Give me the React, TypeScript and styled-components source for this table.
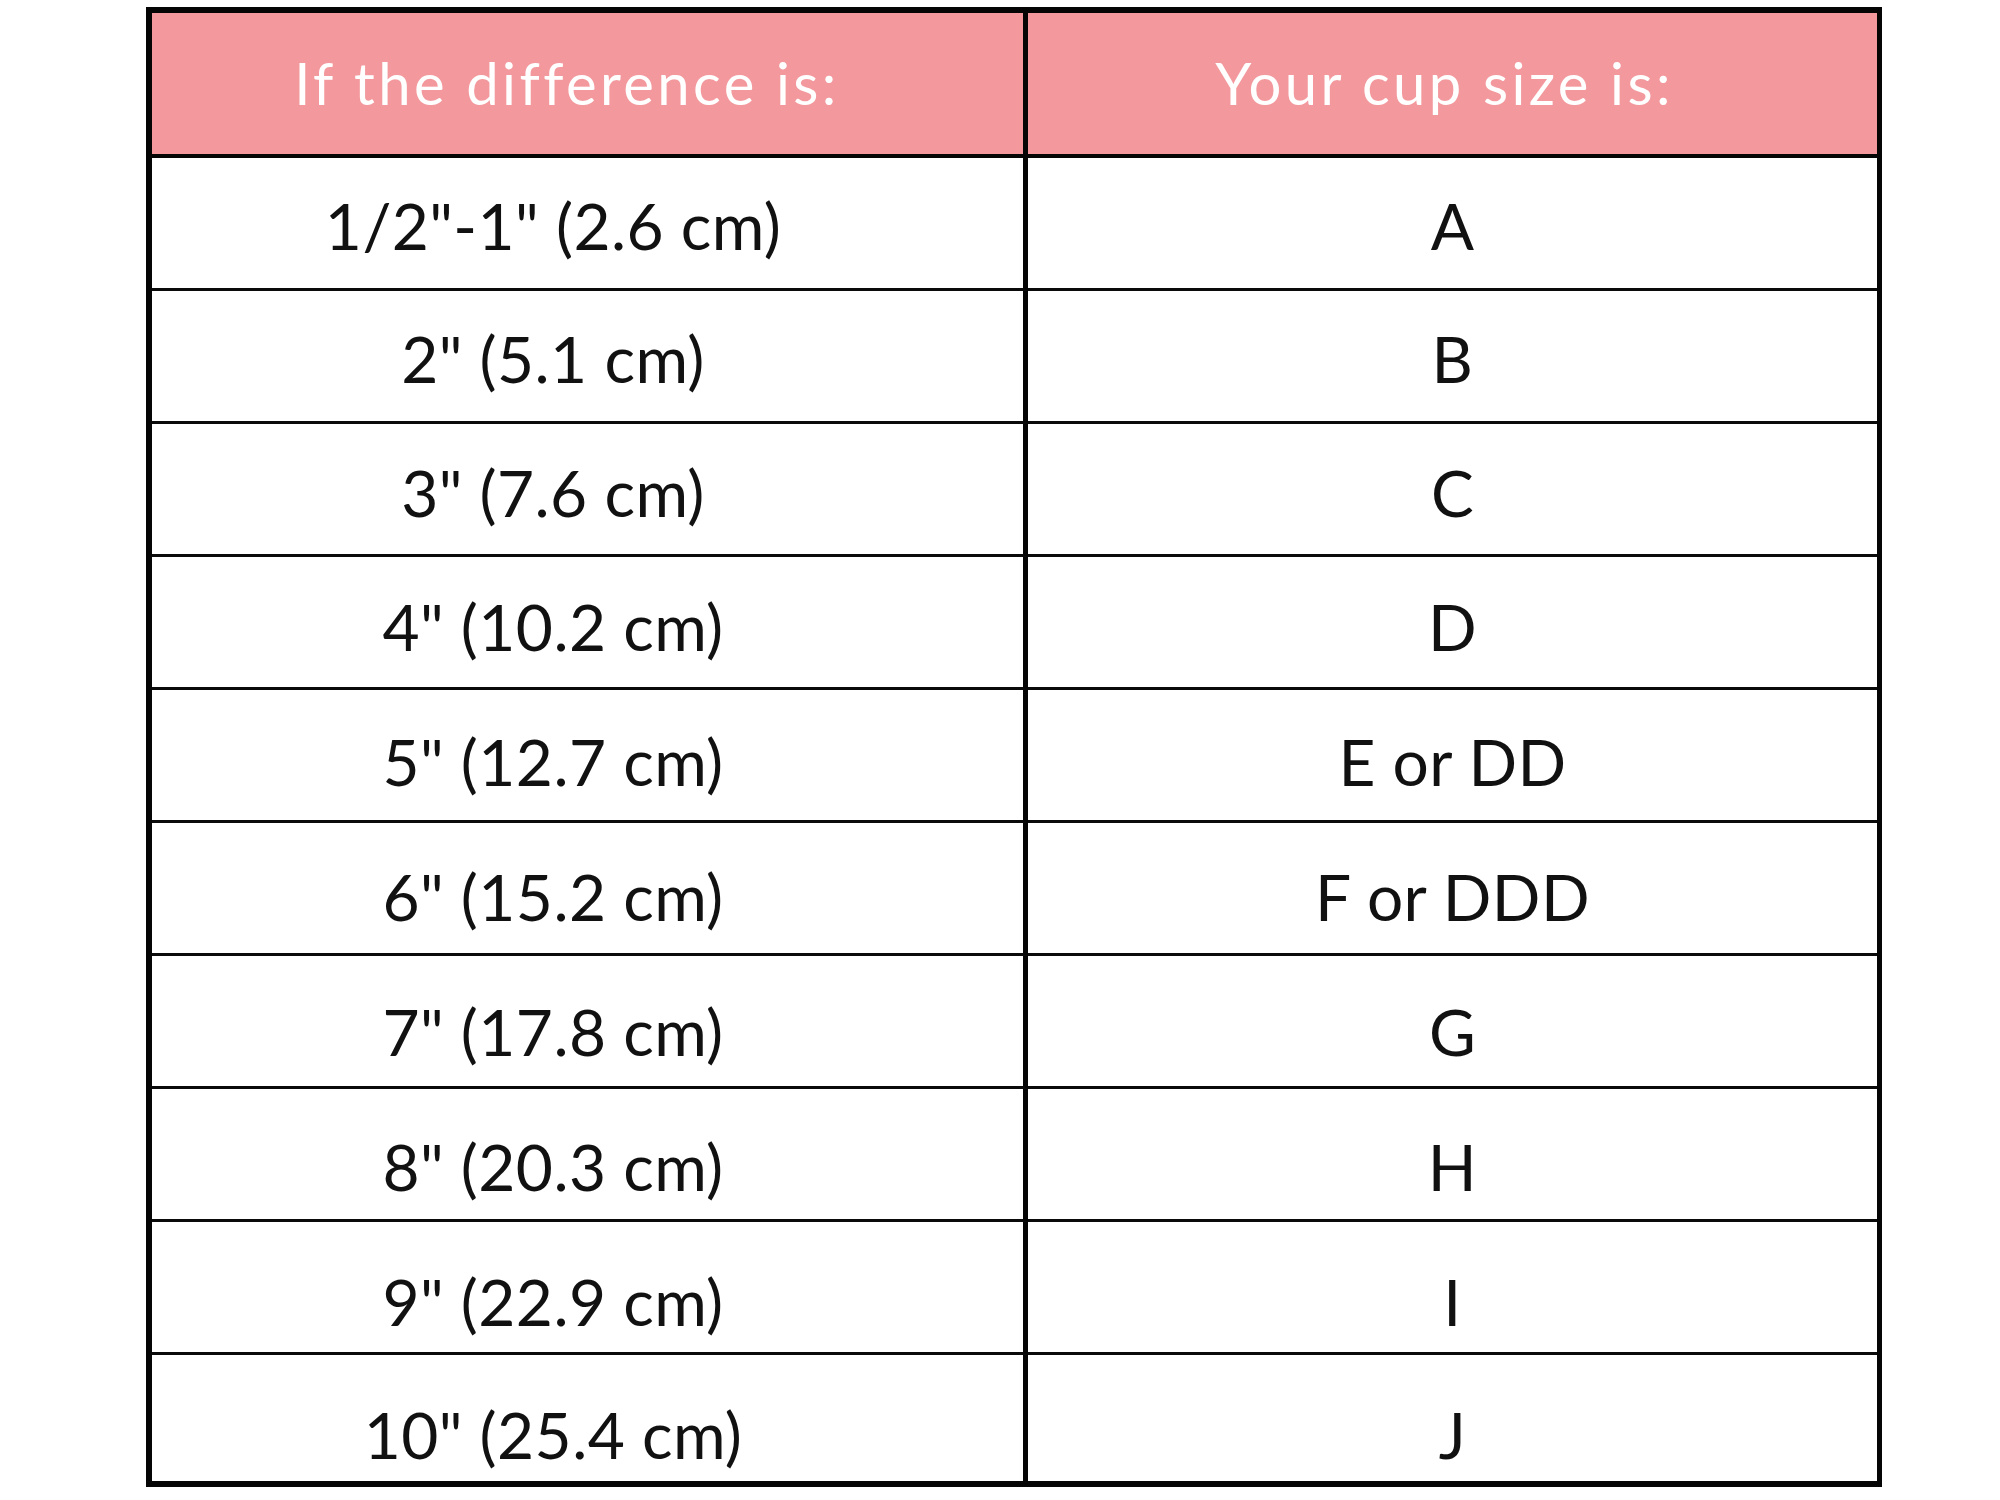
import styled, { createGlobalStyle } from 'styled-components';

const GlobalStyle = createGlobalStyle`
    html, body {
        margin: 0;
        padding: 0;
        background: #fff;
    }
`;

const Page = styled.div`
    width: 2000px;
    height: 1500px;
    box-sizing: border-box;
    padding: 7px 0 0 146px;
`;

const SizeTable = styled.div`
    width: 1736px;
    height: 1480px;
    box-sizing: border-box;
    border: 6px solid #050505;
    border-right-width: 5px;

    display: grid;
    grid-template-columns: 876px 1fr;
    grid-template-rows: 145px repeat(9, 133px) 1fr;
`;

const HeadCell = styled.div<{ $left?: boolean }>`
    box-sizing: border-box;
    display: flex;
    align-items: center;
    justify-content: center;
    padding-right: ${(p) => (p.$left ? '41px' : '16px')};
    padding-bottom: 3px;

    background: #f3999d;
    border-bottom: 4px solid #050505;
    border-right: ${(p) => (p.$left ? '5px solid #050505' : 'none')};

    color: #fff;
    font-family: Lato, 'Open Sans', sans-serif;
    font-size: 58px;
    font-weight: 400;
    letter-spacing: 3.4px;
    white-space: nowrap;
`;

const BodyCell = styled.div<{ $left?: boolean; $last?: boolean; $shift: number }>`
    box-sizing: border-box;
    display: flex;
    align-items: center;
    justify-content: center;
    padding-right: ${(p) => (p.$left ? '69px' : '0')};
    padding-top: ${(p) => p.$shift * 2}px;

    background: #fff;
    border-bottom: ${(p) => (p.$last ? 'none' : '3px solid #0a0a0a')};
    border-right: ${(p) => (p.$left ? '5px solid #050505' : 'none')};

    color: #111;
    font-family: Lato, 'Open Sans', sans-serif;
    font-size: 64px;
    font-weight: 400;
    letter-spacing: 0.4px;
    white-space: nowrap;
`;

// the text sits a little lower in each row further down the chart
const rows: [string, string, number][] = [
    ['1/2"-1" (2.6 cm)', 'A', 2],
    ['2" (5.1 cm)', 'B', 2],
    ['3" (7.6 cm)', 'C', 3],
    ['4" (10.2 cm)', 'D', 4],
    ['5" (12.7 cm)', 'E or DD', 6],
    ['6" (15.2 cm)', 'F or DDD', 8],
    ['7" (17.8 cm)', 'G', 10],
    ['8" (20.3 cm)', 'H', 12],
    ['9" (22.9 cm)', 'I', 14],
    ['10" (25.4 cm)', 'J', 16],
];

export default function App() {
    return (
        <>
            <GlobalStyle />
            <Page>
                <SizeTable>
                    <HeadCell $left>If the difference is:</HeadCell>
                    <HeadCell>Your cup size is:</HeadCell>
                    {rows.map(([diff, cup, shift], i) => {
                        const last = i === rows.length - 1;
                        return [
                            <BodyCell key={`d${i}`} $left $last={last} $shift={shift}>
                                {diff}
                            </BodyCell>,
                            <BodyCell key={`c${i}`} $last={last} $shift={shift}>
                                {cup}
                            </BodyCell>,
                        ];
                    })}
                </SizeTable>
            </Page>
        </>
    );
}
